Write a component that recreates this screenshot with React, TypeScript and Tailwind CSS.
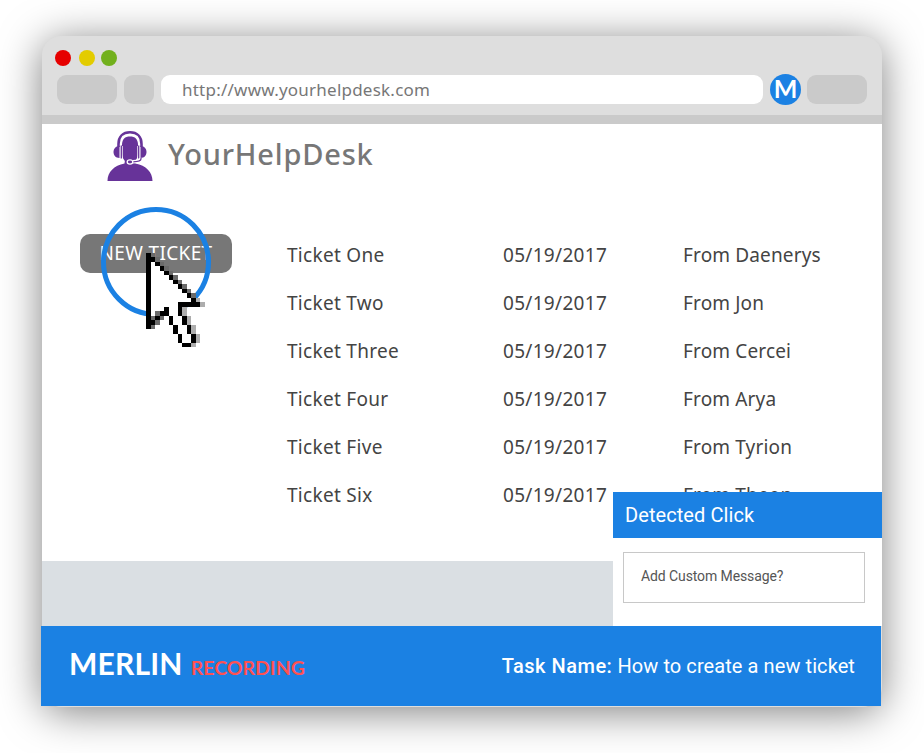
const tickets = [
  ["Ticket One", "From Daenerys"],
  ["Ticket Two", "From Jon"],
  ["Ticket Three", "From Cercei"],
  ["Ticket Four", "From Arya"],
  ["Ticket Five", "From Tyrion"],
  ["Ticket Six", "From Theon"],
];

// # black, g dark grey shade, l light grey shade, . white fill
const cursorRows = [
  "#g           ",
  "##g          ",
  "#.#g         ",
  "#..#g        ",
  "#...#g       ",
  "#....#g      ",
  "#.....#g     ",
  "#......#g    ",
  "#.......#g   ",
  "#........#g  ",
  "#.........#l ",
  "#......#####l",
  "#...#..#l    ",
  "#.g##..#l    ",
  "#g#g.#..#l   ",
  "##g  #..#l   ",
  "#g    #..#l  ",
  "      #..#l  ",
  "       #..#l ",
  "       #..#l ",
  "        ##l  ",
];

const shades: Record<string, string> = { "#": "#000", g: "#6b6b6b", l: "#adadad", ".": "#fff" };

function Cursor() {
  return (
    <svg className="absolute left-[104px] top-[217px] h-[94px] w-[59px]" viewBox="0 0 13 21" preserveAspectRatio="none" shapeRendering="crispEdges">
      {cursorRows.flatMap((row, y) =>
        [...row].map((c, x) => (c === " " ? null : <rect key={`${x}-${y}`} x={x} y={y} width="1" height="1" fill={shades[c]} />)),
      )}
    </svg>
  );
}

function AgentIcon() {
  return (
    <svg className="h-[50px] w-[46px] shrink-0" viewBox="0 0 46 50" fill="none">
      <path d="M0.5 50C0.5 41 7 34.5 17.5 32.5L18 29H28L28.500 32.500C39 34.500 45.500 41 45.500 50Z" fill="#673399" />
      <path d="M15 14C15 8 18 5.500 23 5.500S31 8 31 14V23C31 28 27 32 23 32S15 28 15 23Z" fill="#673399" />
      <path d="M11.500 16V13C11.500 5.500 16 1.300 23 1.300S34.500 5.500 34.500 13V16" stroke="#673399" strokeWidth="2.600" />
      <path d="M12.500 15C8.500 15 6.500 18 6.500 21S8.500 27 12.500 27ZM33.500 15C37.500 15 39.500 18 39.500 21S37.500 27 33.500 27Z" fill="#673399" />
      <path d="M14.300 14.500V27.500M31.700 14.500V27.500" stroke="#673399" strokeWidth="1.300" />
      <path d="M15.500 15V27M30.500 15V27" stroke="#fff" strokeWidth="0.700" />
      <path d="M34 27V28C34 30 32 30.500 26 30.800" stroke="#fff" strokeWidth="3.600" />
      <path d="M34 27V28C34 30 32 30.500 26 30.800" stroke="#673399" strokeWidth="1.200" />
      <ellipse cx="23" cy="31" rx="2.800" ry="2.100" fill="#673399" stroke="#fff" strokeWidth="1.300" />
    </svg>
  );
}

export default function App() {
  return (
    <div className="h-[753px] w-[924px] overflow-hidden bg-white pl-[42px] pt-9 font-['Noto_Sans','Open_Sans',sans-serif]">
      <div className="relative flex h-[671px] w-[840px] flex-col rounded-[20px] bg-[#dedede] shadow-[0_5px_42px_rgba(0,0,0,0.5)]">
        <header className="h-[88px] shrink-0 rounded-t-[20px] border-b-[9px] border-[#cacaca] bg-[#dedede]">
          <div className="flex gap-[7px] pl-[12.500px] pt-[13.500px]">
            <span className="mr-px size-4 rounded-full bg-[#e60000]" />
            <span className="size-4 rounded-full bg-[#e3cc00]" />
            <span className="-ml-px size-4 rounded-full bg-[#72b01d]" />
          </div>
          <div className="mt-[8px] flex h-8 items-center pl-[14.500px]">
            <span className="h-[29px] w-[60px] rounded-[9px] bg-[#cacaca]" />
            <span className="ml-[7.500px] h-[29px] w-[30px] rounded-[9px] bg-[#cacaca]" />
            <div className="ml-[7px] flex h-[29px] w-[602px] items-center rounded-[9px] bg-white pl-[21px] text-[17px] tracking-[0.23px] text-[#777]">
              <span>http://www.yourhelpdesk.com</span>
            </div>
            <span className="ml-[7px] flex size-[31px] items-center justify-center rounded-full bg-[#1b81e3] pb-[3px] font-['Lato',sans-serif] text-[25px] font-bold leading-none text-white">
              M
            </span>
            <span className="ml-[6px] h-[29px] w-[60px] rounded-[9px] bg-[#cacaca]" />
          </div>
        </header>

        <main className="h-[437px] shrink-0 bg-white">
          <div className="flex h-[110px] pl-[64.500px] pt-[7px]">
            <AgentIcon />
            <h1 className="ml-[15.500px] text-[29px] font-medium leading-[46px] tracking-[0.8px] text-[#777]">YourHelpDesk</h1>
          </div>
          <div className="flex">
            <button className="ml-[38px] h-[39px] w-[152px] rounded-[10px] bg-[#777] text-[19px] leading-[39px] tracking-[0.35px] text-white">NEW TICKET</button>
            <div className="ml-[55px] -mt-[3px] text-[19px] leading-[48px] text-[#444]">
              {tickets.map(([name, from]) => (
                <div key={name} className="grid grid-cols-[216px_180px_180px] tracking-[0.3px]">
                  <span>{name}</span>
                  <span>05/19/2017</span>
                  <span className="tracking-[0.15px]">{from}</span>
                </div>
              ))}
            </div>
          </div>
        </main>
        <div className="h-[65px] shrink-0 bg-[#dadfe3]" />
        <footer className="-ml-px flex h-20 w-[840px] shrink-0 items-center bg-[#1b81e3] pl-[28px] pr-[26px] text-white">
          <div className="flex items-baseline pb-[5px] font-['Lato',sans-serif]">
            <span className="text-[30px] font-bold tracking-[0.2px]">MERLIN</span>
            <span className="ml-2 text-[19.500px] font-bold text-[#ff5152]">RECORDING</span>
          </div>
          <p className="ml-auto pb-px font-['Roboto',sans-serif] text-[20px] tracking-[0.08px]">
            <span className="font-medium tracking-[0.5px]">Task Name:</span> How to create a new ticket
          </p>
        </footer>

        <aside className="absolute left-[571px] top-[456px] h-[134px] w-[269px] bg-white font-['Roboto',sans-serif]">
          <div className="h-[46px] bg-[#1b81e3] pl-3 text-[20px] leading-[46px] tracking-[0.08px] text-white">Detected Click</div>
          <div className="ml-[10px] mt-[14px] h-[51px] w-[242px] border border-[#c8c8c8] pl-[17px] text-[14px] leading-[47px] tracking-[-0.1px] text-[#555]">Add Custom Message?</div>
        </aside>

        <div className="absolute left-[59px] top-[171px] size-[110px] rounded-full border-[5px] border-[#1b81e3]" />
        <Cursor />
      </div>
    </div>
  );
}
